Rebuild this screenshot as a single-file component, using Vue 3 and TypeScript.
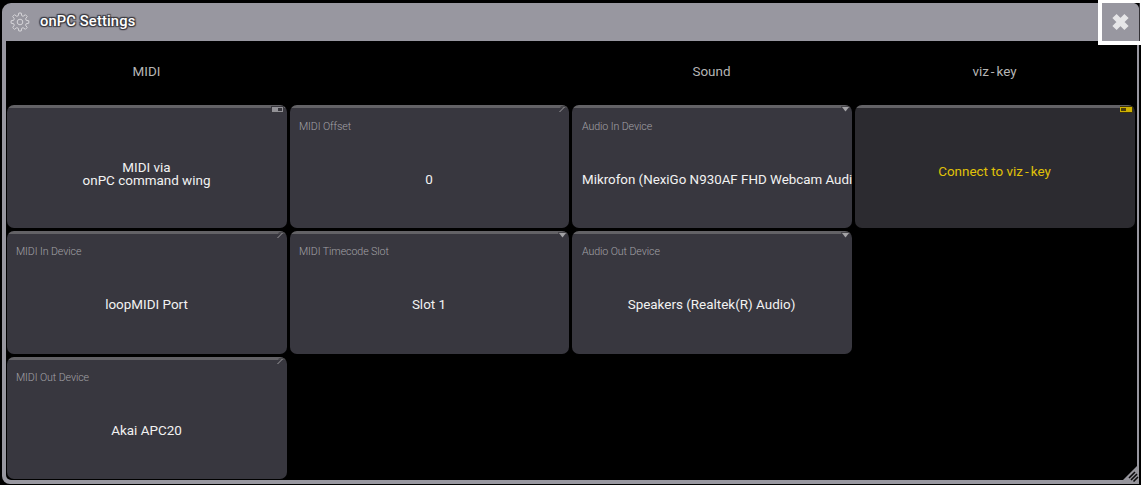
<script setup lang="ts">
type Mark = 'toggle' | 'toggle-on' | 'edit' | 'menu'
interface Card { label?: string; lines: string[]; mark: Mark; key: string }

const headings = ['MIDI', '', 'Sound', 'viz-key']
const rows: Card[][] = [
  [
    { key: 'wing', lines: ['MIDI via', 'onPC command wing'], mark: 'toggle' },
    { key: 'offset', label: 'MIDI Offset', lines: ['0'], mark: 'edit' },
    { key: 'audio-in', label: 'Audio In Device', lines: ['Mikrofon (NexiGo N930AF FHD Webcam Audi'], mark: 'menu' },
    { key: 'viz', lines: ['Connect to viz-key'], mark: 'toggle-on' },
  ],
  [
    { key: 'midi-in', label: 'MIDI In Device', lines: ['loopMIDI Port'], mark: 'edit' },
    { key: 'timecode', label: 'MIDI Timecode Slot', lines: ['Slot 1'], mark: 'menu' },
    { key: 'audio-out', label: 'Audio Out Device', lines: ['Speakers (Realtek(R) Audio)'], mark: 'menu' },
  ],
  [{ key: 'midi-out', label: 'MIDI Out Device', lines: ['Akai APC20'], mark: 'edit' }],
]
const cards = rows.flatMap((row, r) => row.map((card, c) => ({ ...card, place: `r${r + 1} c${c + 1}` })))

// Splits around hyphens so they can be spaced out.
function pieces(text: string): string[] {
  return text.split(/(-)/)
}
</script>

<template>
  <div class="screen">
    <section class="window">
      <header class="titlebar">
        <svg class="gear" width="20" height="20" viewBox="0 0 20 20">
          <path d="M8.3 3.7 8.8 1h2.4l.5 2.7 1.4.6 2.3-1.6 1.8 1.8-1.6 2.3.6 1.5 2.6.5v2.4l-2.6.5-.6 1.5 1.6 2.3-1.8 1.8-2.3-1.6-1.4.6-.5 2.7H8.8l-.5-2.7-1.5-.6-2.3 1.6-1.8-1.8 1.6-2.3-.6-1.5L1.1 11.2V8.8l2.6-.5.6-1.5-1.6-2.3 1.8-1.8 2.3 1.6Z" />
          <circle cx="10" cy="10" r="2.8" />
        </svg>
        <h1>onPC Settings</h1>
      </header>
      <main class="body">
        <div class="headings">
          <span v-for="(h, i) in headings" :key="i"><i v-for="(p, j) in pieces(h)" :key="j" :class="{ hyphen: p === '-' }">{{ p }}</i></span>
        </div>
        <div class="grid">
          <button v-for="card in cards" :key="card.key" type="button" class="card" :class="[card.key, card.place, { titled: card.label }]">
            <span v-if="card.label" class="label">{{ card.label }}</span>
            <span class="value">
              <span v-for="line in card.lines" :key="line" class="line"><i v-for="(p, j) in pieces(line)" :key="j" :class="{ hyphen: p === '-' }">{{ p }}</i></span>
            </span>
            <svg v-if="card.mark === 'toggle'" class="mark" width="14" height="8" viewBox="0 0 14 8">
              <path d="M0 1h13v7H0z" fill="#38373d" /><path d="M1 2h11v5H1z" fill="#929196" /><path d="M7 3h4v3H7z" fill="#38373d" />
            </svg>
            <svg v-else-if="card.mark === 'toggle-on'" class="mark on" width="14" height="8" viewBox="0 0 14 8">
              <path d="M0 1h13v7H0z" fill="#3c340d" /><path d="M0 2h12v5H0z" fill="#cfb100" /><path d="M1 3h5v3H1z" fill="#4c3f0b" />
            </svg>
            <svg v-else-if="card.mark === 'edit'" class="mark" width="14" height="8" viewBox="0 0 14 8">
              <path d="M8 1h6v2h-7z" fill="#48474b" /><path d="m6.5 7 5-5" stroke="#9b9a9d" stroke-width="1" />
            </svg>
            <svg v-else class="mark" width="14" height="8" viewBox="0 0 14 8">
              <path d="M5 1h9v2H5z" fill="#48474b" /><path d="M6 2h7L9.5 6.5z" fill="#a4a3a6" />
            </svg>
          </button>
        </div>
      </main>
      <svg class="resize" width="19" height="20" viewBox="0 0 19 20">
        <path d="M19 0v20H0v-1z" fill="#96959c" />
        <path d="m9 14 6-6M11 16l6-6M13.5 17.5l4.5-4.5" stroke="#09090b" stroke-width="1.6" />
      </svg>
    </section>
    <button type="button" class="close" aria-label="Close">
      <svg width="37" height="38" viewBox="0 0 37 38">
        <path d="m12.5 13 12 12M24.5 13l-12 12" stroke="#e6e6e8" stroke-width="6" />
        <path d="M32 0h5v5q-1-4-5-5z" fill="#000" />
      </svg>
    </button>
  </div>
</template>

<style>
body { margin: 0; background: #000; }
</style>

<style scoped>
* { box-sizing: border-box; }
i { font-style: normal; white-space: pre; }
.screen { position: relative; width: 1141px; height: 485px; padding: 3px 2px 1px; background: #000; font-family: Roboto, "Noto Sans", sans-serif; overflow: hidden; }
.window { position: relative; width: 1137px; height: 481px; border-radius: 9px 7px 0 8px; background: #9897a0; padding: 0 2px 4px 4px; }
.titlebar { display: flex; align-items: center; height: 38px; padding-left: 4px; }
.gear { fill: none; stroke: #d7d6da; stroke-width: 1; }
h1 { margin: 0 0 2px 10px; color: #fff; font-size: 14.67px; line-height: 18px; font-weight: 500; letter-spacing: .16px; text-shadow: -1px -1px 1px #39383e, 1px -1px 1px #39383e, -1px 1px 1px #39383e, 1px 1px 1px #39383e, 0 0 2px #39383e; }
.body { height: 439px; background: #000; border-radius: 0 0 4px 5px; padding-left: 1px; }
.headings { display: grid; grid-template-columns: 279px 279px 280px 280px; column-gap: 3px; height: 64px; text-align: center; color: #b5b5b5; font-size: 13.45px; line-height: 61px; }
.grid { display: grid; grid-template-columns: 280px 279px 280px 280px; grid-template-rows: 123px 123px 122px; gap: 3px; }
.headings span:nth-child(n + 2) { padding-left: 1px; }
.card { position: relative; display: flex; align-items: center; justify-content: center; min-width: 0; padding: 0 10px 0 9px; border: 0; border-radius: 7px; background: linear-gradient(#636266 0 3px, #38373f 3px); color: #f2f2f2; font: 400 13.45px/13px Roboto, "Noto Sans", sans-serif; overflow: hidden; }
.r1 { grid-row: 1; }
.r2 { grid-row: 2; }
.r3 { grid-row: 3; }
.c1 { grid-column: 1; }
.c2 { grid-column: 2; }
.c3 { grid-column: 3; }
.c4 { grid-column: 4; }
.titled { flex-direction: column; align-items: stretch; justify-content: flex-start; padding-top: 14px; }
.titled.r1 { padding-top: 15px; }
.label { align-self: flex-start; font-size: 10.67px; line-height: 14px; font-weight: 300; letter-spacing: -.1px; color: #a3a2a7; }
.value { display: flex; flex-direction: column; align-items: center; white-space: nowrap; }
.wing .value { padding-top: 14px; }
.viz .value { padding-top: 10px; }
.titled .value { padding-top: 39px; }
.titled.audio-in { padding-right: 0; padding-left: 10px; }
.titled.audio-out { padding-left: 10px; padding-right: 11px; }
.audio-in .value { align-items: flex-start; font-size: 13.35px; }
.viz { background: linear-gradient(#636266 0 3px, #2c2b30 3px); color: #e0c208; }
.hyphen { padding: 0 2px; }
.mark { position: absolute; top: 0; right: 2px; fill: none; }
.mark.on { right: 1px; }
.resize { position: absolute; right: 0; bottom: 0; }
.close { position: absolute; right: 0; top: 0; display: block; width: 43px; height: 45px; padding: 0; border: solid #fff; border-width: 3px 1px 4px 4px; background: #9897a0; box-shadow: inset -1px 0 #333237; }
.close svg { display: block; }
</style>
